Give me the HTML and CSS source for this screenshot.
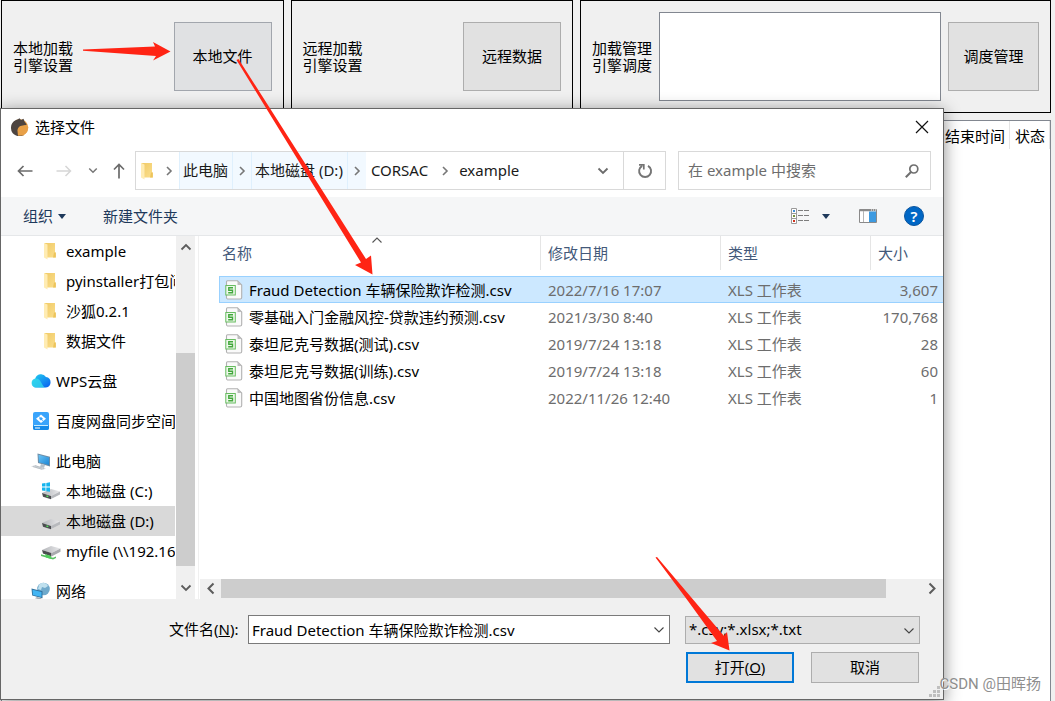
FILE: index.html
```html
<!DOCTYPE html>
<html lang="zh-CN">
<head>
<meta charset="utf-8">
<title>选择文件</title>
<link rel="stylesheet" href="styles.css">
</head>
<body>
<svg class="defs" aria-hidden="true">
  <defs>
    <linearGradient id="g-folder" x1="0" y1="0" x2="1" y2="1"><stop offset="0" stop-color="#f0ca66"/><stop offset="1" stop-color="#fbdf8e"/></linearGradient>
    <linearGradient id="g-cloud" x1="0" y1="0" x2="1" y2="1"><stop offset="0" stop-color="#22d3f0"/><stop offset="1" stop-color="#0a5cf0"/></linearGradient>
    <linearGradient id="g-screen" x1="0" y1="0" x2="1" y2="1"><stop offset="0" stop-color="#6cc4f5"/><stop offset="1" stop-color="#1b86d6"/></linearGradient>
    <linearGradient id="g-disk" x1="0" y1="0" x2="1" y2="0"><stop offset="0" stop-color="#b4b6ba"/><stop offset="1" stop-color="#e8e8ea"/></linearGradient>
  </defs>
  <symbol id="folder" viewBox="0 0 14 18"><path d="M1.500 1h10.500v9.500h.8v5H4L1.500 14z" fill="url(#g-folder)"/><path d="M11 10.500h1.800v5H10z" fill="#edc45c"/><path d="M1 1l3.500 1.500v15L1 15.500z" fill="#ffecb3"/></symbol>
  <symbol id="right" viewBox="0 0 8 10"><path d="M2 1l4 4-4 4" fill="none" stroke="currentColor" stroke-width="1.600"/></symbol>
  <symbol id="down" viewBox="0 0 12 8"><path d="M1.500 1.500L6 6l4.500-4.500" fill="none" stroke="currentColor" stroke-width="1.800"/></symbol>
  <symbol id="thin-down" viewBox="0 0 12 8"><path d="M1.500 1.500L6 6l4.500-4.500" fill="none" stroke="currentColor" stroke-width="1.100"/></symbol>
  <symbol id="sheet" viewBox="0 0 18 20"><path d="M2.500.8h10l4.200 4.200v12.500a1.500 1.500 0 0 1-1.500 1.500H2.500A1.300 1.300 0 0 1 1.500 17.800V2A1.200 1.200 0 0 1 2.500.8z" fill="#fafafa" stroke="#b1b1b1" stroke-width="1.100"/><path d="M12.500.8l4.200 4.200h-4.200z" fill="#bdbdbd"/><rect x=".8" y="5.500" width="9.500" height="9.500" fill="#eef8ec" stroke="#68bd61"/><path d="M8 7.800H3.800v2.400h3.700v2.500H3.200" fill="none" stroke="#43a83c" stroke-width="1.400"/></symbol>
  <symbol id="drive" viewBox="0 0 20 18"><path d="M1 11l9-4 9 2.500-9 4.500z" fill="url(#g-disk)"/><path d="M1 11l9 3v3.200L2 14.800z" fill="#4b4d50"/><path d="M10 14l9-4.500v3L10 17z" fill="#b7b9bd"/><path d="M5.500 14l1.800.6" stroke="#57e05f" stroke-width="1.400"/></symbol>
</svg>

<div class="app">
  <header class="engines">
    <section class="panel"><p class="caption">本地加载<br>引擎设置</p><button class="big hot" type="button">本地文件</button></section>
    <section class="panel"><p class="caption">远程加载<br>引擎设置</p><button class="big" type="button">远程数据</button></section>
    <section class="panel"><p class="caption">加载管理<br>引擎调度</p><div class="queue"></div><button class="big narrow" type="button">调度管理</button></section>
  </header>
  <main class="tasks">
    <table class="task-table">
      <thead><tr><th></th><th class="end">结束时间</th><th class="state">状态</th></tr></thead>
    </table>
  </main>
</div>

<div class="dialog" role="dialog" aria-labelledby="dlg-title">
  <div class="titlebar">
    <svg class="logo" viewBox="0 0 18 18"><circle cx="9" cy="9.500" r="8.300" fill="#e8a047"/><path d="M13 17A9 9 0 0 1 5 17.500 8.500 8.500 0 0 1 5 2l2-.8 1.500-1L10 2l2.500-1.200 1 2.600 2.200 3-1.500 1.200-4.200.8c-2.500 1-3.500 3-3.500 5 0 1.800.5 2.600-.5 4.100A8 8 0 0 1 .8 8z" fill="#4d4440"/><path d="M6.500 13c0-3 1.500-4.700 4-5.200l4-.8 2.300 3-.7 4-3.600 3.500-5.500.3z" fill="#e8a047"/></svg>
    <h1 id="dlg-title">选择文件</h1>
    <button class="plain close" type="button" aria-label="关闭"><svg viewBox="0 0 14 14"><path d="M1 1l12 12M13 1L1 13" stroke="#111" stroke-width="1.200"/></svg></button>
  </div>

  <div class="nav">
    <div class="history">
      <button class="plain" type="button" aria-label="后退"><svg width="16" height="12" viewBox="0 0 16 12"><path d="M15.500 6H1.500M6.500 1L1.500 6l5 5" fill="none" stroke="#6b6b6b" stroke-width="1.700"/></svg></button>
      <button class="plain" type="button" aria-label="前进"><svg width="16" height="12" viewBox="0 0 16 12"><path d="M.5 6h14M9.500 1l5 5-5 5" fill="none" stroke="#d6d6d6" stroke-width="1.500"/></svg></button>
      <button class="plain recent" type="button" aria-label="最近位置"><svg width="10" height="7"><use href="#down"/></svg></button>
      <button class="plain up" type="button" aria-label="上移"><svg width="12" height="16" viewBox="0 0 12 16"><path d="M6 15.500V1.500M1 6.500l5-5 5 5" fill="none" stroke="#6b6b6b" stroke-width="1.700"/></svg></button>
    </div>
    <div class="address">
      <svg class="folder" width="14" height="18"><use href="#folder"/></svg>
      <button class="plain sep first" type="button" aria-label="展开"><svg width="8" height="10"><use href="#right"/></svg></button>
      <button class="plain crumb lit" type="button">此电脑</button>
      <button class="plain sep lit" type="button" aria-label="展开"><svg width="8" height="10"><use href="#right"/></svg></button>
      <button class="plain crumb lit" type="button">本地磁盘 (D:)</button>
      <button class="plain sep lit" type="button" aria-label="展开"><svg width="8" height="10"><use href="#right"/></svg></button>
      <button class="plain crumb" type="button">CORSAC</button>
      <button class="plain sep" type="button" aria-label="展开"><svg width="8" height="10"><use href="#right"/></svg></button>
      <button class="plain crumb" type="button">example</button>
      <button class="plain drop" type="button" aria-label="以前的位置"><svg width="12" height="8"><use href="#down"/></svg></button>
      <button class="plain refresh" type="button" aria-label="刷新"><svg width="16" height="16" viewBox="0 0 16 16"><path d="M5.200 2.800A6 6 0 1 0 11 2.800" fill="none" stroke="#757575" stroke-width="1.900"/><path d="M2 1.800h4.800v4.800" fill="none" stroke="#757575" stroke-width="1.700"/></svg></button>
    </div>
    <div class="search">
      <input type="text" placeholder="在 example 中搜索" aria-label="搜索">
      <svg width="14" height="14" viewBox="0 0 14 14"><circle cx="8.800" cy="5" r="4" fill="none" stroke="#6f6f6f" stroke-width="1.700"/><path d="M6 8L.8 13.200" stroke="#6f6f6f" stroke-width="2"/></svg>
    </div>
  </div>

  <div class="toolbar">
    <button class="plain tool" type="button">组织<svg width="8" height="5" viewBox="0 0 8 5"><path d="M0 0h8L4 5z" fill="#1e395b"/></svg></button>
    <button class="plain tool" type="button">新建文件夹</button>
    <button class="plain view" type="button" aria-label="更改视图">
      <svg width="18" height="16" viewBox="0 0 18 16"><path d="M.5.500h5v15h-5zM.5 5.500h5M.5 10.500h5" fill="#fff" stroke="#9a9a9a"/><path d="M2 2h2v2H2z" fill="#3f8fd6"/><path d="M2 7h2v2H2z" fill="#76923c"/><path d="M2 12h2v2H2z" fill="#d2301c"/><path d="M7 2.500h5M13 2.500h5M7 7.500h5M13 7.500h5M7 12.500h5M13 12.500h5" stroke="#7d7d7d"/></svg>
      <svg width="8" height="5" viewBox="0 0 8 5"><path d="M0 0h8L4 5z" fill="#1e395b"/></svg>
    </button>
    <button class="plain preview" type="button" aria-label="预览窗格"><svg width="18" height="14" viewBox="0 0 18 14"><path d="M.5.500h17v13H.5z" fill="#fff" stroke="#8a8a8a"/><path d="M1 1.500h16" stroke="#8a8a8a" stroke-width="1.500"/><path d="M4.500 2v11" stroke="#b5b5b5"/><path d="M10 2.500h7V13h-7z" fill="#3d9ae0"/><path d="M12 1h1M14 1h1M16 1h1" stroke="#fff"/></svg></button>
    <button class="plain help" type="button" aria-label="帮助">?</button>
  </div>

  <div class="body">
    <nav class="tree">
      <ul>
        <li class="sub"><svg class="folder" width="14" height="18"><use href="#folder"/></svg><a href="#">example</a></li>
        <li class="sub"><svg class="folder" width="14" height="18"><use href="#folder"/></svg><a href="#">pyinstaller打包问题</a></li>
        <li class="sub"><svg class="folder" width="14" height="18"><use href="#folder"/></svg><a href="#">沙狐0.2.1</a></li>
        <li class="sub"><svg class="folder" width="14" height="18"><use href="#folder"/></svg><a href="#">数据文件</a></li>
        <li class="root"><svg width="20" height="18" viewBox="0 0 20 18"><path d="M5 15.500a4.500 4.500 0 0 1-.8-8.800A6 6 0 0 1 15 5a5.300 5.300 0 0 1 0 10.500z" fill="url(#g-cloud)"/><path d="M5 15.500a4.500 4.500 0 0 1 0-9c3 0 4 2 5.500 4.500s2 4 4 4.500z" fill="#35dcec" opacity=".75"/></svg><a href="#">WPS云盘</a></li>
        <li class="root"><svg width="20" height="20" viewBox="0 0 20 20"><rect x="2" y="1" width="16" height="18" rx="2" fill="#3aa4fb"/><path d="M2 14.500h16V17a2 2 0 0 1-2 2H4a2 2 0 0 1-2-2z" fill="#168ae8"/><path d="M3 14.500h14" stroke="#c8ecff"/><path d="M4 17h5" stroke="#fff"/><path d="M10 3.500l5 4.200-5 4.300-5-4.300z" fill="#fff"/><path d="M10 6l2 1.800L10 9.500 8 7.800z" fill="#3aa4fb"/><path d="M7 4.500l6 6.500" stroke="#3aa4fb" stroke-width=".8"/></svg><a href="#">百度网盘同步空间</a></li>
        <li class="root"><svg width="20" height="18" viewBox="0 0 20 18"><path d="M6.500 1.500L19 4.800v9.700L7 11z" fill="#6d8da6"/><path d="M7.500 2.800L18 5.600v7.400L8 10.300z" fill="url(#g-screen)"/><path d="M10 12l4 1-1 3-4-1z" fill="#b6c1ca"/><path d="M0 14.500l4-1.500 11 3.500-3.500 1.500z" fill="#d7dce0"/><path d="M2 14.500l9 2.700M4 13.700l9 2.800" stroke="#aeb5ba" stroke-width=".7"/></svg><a href="#">此电脑</a></li>
        <li class="sub"><svg width="20" height="18" viewBox="0 0 20 18"><use href="#drive"/><path d="M1 1.500l3.500-.5v3.600H1zM5.300.9L9 .3v4.300H5.300zM1 5.400h3.500V9L1 8.500zM5.300 5.400H9v4.300l-3.700-.5z" fill="#16b5ee"/></svg><a href="#">本地磁盘 (C:)</a></li>
        <li class="sub current"><svg width="20" height="18"><use href="#drive"/></svg><a href="#">本地磁盘 (D:)</a></li>
        <li class="sub"><svg width="20" height="18" viewBox="0 0 20 18"><path d="M1 8l9-4 9.500 2.500-9 4.500z" fill="url(#g-disk)"/><path d="M1 8l9.500 3v3.500L2 11.500z" fill="#4b4d50"/><path d="M10.500 11l9-4.500v3.200l-9 4.800z" fill="#a9abaf"/><path d="M0 12.300l12 3.400 3-1.300v1.600l-3 1.500L0 14z" fill="#58bf62"/><path d="M4 12l6 2v3l-5-1.500z" fill="#4fcf5b"/></svg><a href="#">myfile (\\192.168</a></li>
        <li class="root"><svg width="20" height="18" viewBox="0 0 20 18"><circle cx="12.500" cy="7" r="6.300" fill="#6fa9cb"/><path d="M8 3c2-3 7-3 9 1l-3 2-3-1-1 3-3-1z" fill="#bfe0ee"/><path d="M.5 6.500l11 2.700v7L1.200 13.600z" fill="#31719e"/><path d="M1.500 7.700l9 2.200v5L2 12.900z" fill="#42b5f3"/><path d="M6 15l5 1.500-2 1-5-1.200z" fill="#a3adb4"/></svg><a href="#">网络</a></li>
      </ul>
    </nav>
    <div class="vscroll">
      <button class="plain" type="button" aria-label="向上滚动"><svg class="flip" width="12" height="8"><use href="#down"/></svg></button>
      <div class="vtrack"><div class="vthumb"></div></div>
      <button class="plain" type="button" aria-label="向下滚动"><svg width="12" height="8"><use href="#down"/></svg></button>
    </div>
    <div class="files">
      <div class="list">
        <table class="file-table">
          <colgroup><col><col class="c-date"><col class="c-type"><col class="c-size"></colgroup>
          <thead><tr><th>名称<svg class="sort flip" width="12" height="8"><use href="#thin-down"/></svg></th><th>修改日期</th><th>类型</th><th>大小</th></tr></thead>
          <tbody>
            <tr class="selected"><td><span class="name"><svg width="18" height="20"><use href="#sheet"/></svg>Fraud Detection 车辆保险欺诈检测.csv</span></td><td>2022/7/16 17:07</td><td>XLS 工作表</td><td>3,607</td></tr>
            <tr><td><span class="name"><svg width="18" height="20"><use href="#sheet"/></svg>零基础入门金融风控-贷款违约预测.csv</span></td><td>2021/3/30 8:40</td><td>XLS 工作表</td><td>170,768</td></tr>
            <tr><td><span class="name"><svg width="18" height="20"><use href="#sheet"/></svg>泰坦尼克号数据(测试).csv</span></td><td>2019/7/24 13:18</td><td>XLS 工作表</td><td>28</td></tr>
            <tr><td><span class="name"><svg width="18" height="20"><use href="#sheet"/></svg>泰坦尼克号数据(训练).csv</span></td><td>2019/7/24 13:18</td><td>XLS 工作表</td><td>60</td></tr>
            <tr><td><span class="name"><svg width="18" height="20"><use href="#sheet"/></svg>中国地图省份信息.csv</span></td><td>2022/11/26 12:40</td><td>XLS 工作表</td><td>1</td></tr>
          </tbody>
        </table>
      </div>
      <div class="hscroll">
        <button class="plain" type="button" aria-label="向左滚动"><svg class="flip" width="10" height="13"><use href="#right"/></svg></button>
        <div class="htrack"><div class="hthumb"></div></div>
        <button class="plain" type="button" aria-label="向右滚动"><svg width="10" height="13"><use href="#right"/></svg></button>
      </div>
    </div>
  </div>

  <form class="footer">
    <div class="row">
      <label for="fname">文件名(<u>N</u>):</label>
      <div class="combo"><input id="fname" type="text" value="Fraud Detection 车辆保险欺诈检测.csv"><svg width="12" height="8"><use href="#thin-down"/></svg></div>
      <div class="filter"><select aria-label="文件类型"><option>*.csv;*.xlsx;*.txt</option></select><svg width="12" height="8"><use href="#thin-down"/></svg></div>
    </div>
    <div class="row actions">
      <button class="btn primary" type="button">打开(<u>O</u>)</button>
      <button class="btn" type="button">取消</button>
    </div>
    <svg class="grip" width="12" height="12" viewBox="0 0 12 12"><path d="M8 0h3v3H8zM4 4h3v3H4zM8 4h3v3H8zM0 8h3v3H0zM4 8h3v3H4zM8 8h3v3H8z" fill="#bfbfbf"/></svg>
  </form>
</div>

<svg class="marks" width="1055" height="701" viewBox="0 0 1055 701" aria-hidden="true">
  <g fill="#ff2414">
    <path d="M83 49.500L155 46.500 153 42 170.500 51.500 153 60.500 156 56 83 50.800z"/>
    <path d="M236.500 60L238.500 59 366 259 371 255.500 372.500 274.500 355 265 361 262.500z"/>
    <path d="M655.500 557.500L657 557 724 636 727 632 729.500 650.500 711 643 717 641 688 601z"/>
  </g>
</svg>
<p class="watermark">CSDN @田晖扬</p>
</body>
</html>
```
FILE: styles.css
```css
* { box-sizing: border-box; }

body {
  margin: 0;
  min-height: 100vh;
  position: relative;
  overflow: hidden;
  background: #f0f0f0;
  color: #000;
  font: 15px/20px "Noto Sans", "Noto Sans CJK SC", sans-serif;
}

button, input, select { font: inherit; color: inherit; }
svg { display: block; flex: none; }
p, h1, ul { margin: 0; padding: 0; }
a { color: inherit; text-decoration: none; }

.defs { position: absolute; width: 0; height: 0; }
.flip { transform: rotate(180deg); }

.plain {
  display: flex;
  align-items: center;
  justify-content: center;
  padding: 0;
  border: 0;
  background: none;
}

/* Main window */
.app {
  display: flex;
  flex-direction: column;
  gap: 7px;
  height: 100vh;
  padding: 0 4px 0 1px;
}

.engines {
  display: grid;
  grid-template-columns: 3fr 3fr 5fr;
  gap: 7px;
}

.panel {
  display: flex;
  align-items: center;
  justify-content: space-between;
  gap: 7px;
  padding: 11px;
  border: 1px solid #000;
}

.caption { line-height: 17px; white-space: nowrap; }

.big {
  flex: none;
  width: 98px;
  height: 69px;
  padding: 0 0 2px;
  border: 1px solid #adadad;
  background: #e1e1e1;
}
.big.hot { border-color: #a2a6ad; background: #e0e1e3; }
.big.narrow { width: 91px; }

.queue {
  flex: 1;
  height: 89px;
  border: 1px solid #828790;
  background: #fff;
}

.tasks {
  flex: 1;
  border: 1px solid #828790;
  border-bottom: 0;
  background: #fff;
}
.task-table { width: 100%; border-collapse: collapse; table-layout: fixed; }
.task-table th {
  height: 28px;
  padding: 2px 4px 0;
  border-right: 1px solid #e5e5e5;
  font-weight: 400;
  text-align: right;
}
.task-table .end { width: 90px; }
.task-table .state { width: 40px; }

/* File dialog, floating over the main window */
.dialog {
  position: absolute;
  top: 108px;
  right: 111px;
  bottom: 1px;
  left: 0;
  display: flex;
  flex-direction: column;
  border: 1px solid #666;
  background: #fff;
  box-shadow: 0 3px 16px rgba(0, 0, 0, .45);
}

.titlebar {
  display: flex;
  align-items: center;
  gap: 6px;
  height: 36px;
  padding: 0 14px 0 10px;
}
.titlebar h1 { flex: 1; font-size: 15px; font-weight: 400; }
.logo { width: 18px; height: 18px; }
.close svg { width: 14px; height: 14px; }

.nav {
  display: flex;
  align-items: center;
  gap: 12px;
  height: 52px;
  padding: 0 12px 1px 16px;
}
.history { display: flex; align-items: center; gap: 16px; width: 106px; }
.history .plain:nth-child(2) { margin-left: 7px; }
.history .up { margin-left: -1px; }
.recent { color: #777; }

.address {
  flex: 1;
  display: flex;
  align-items: stretch;
  height: 39px;
  border: 1px solid #d9d9d9;
  color: #1a1a1a;
}
.address .folder { align-self: center; margin-left: 4px; }
.crumb { padding: 0 7px 2px 5px; white-space: nowrap; }
.sep { width: 19px; color: #777; }
.sep.first { width: 25px; padding-left: 4px; }
.lit { background: #f2f9ff; border-left: 1px solid #dff0fd; }
.crumb.lit { padding: 0 4px 2px 3px; }
.drop { width: 40px; margin-left: auto; color: #6b6b6b; }
.refresh { width: 42px; border-left: 1px solid #d9d9d9; }

.search {
  display: flex;
  align-items: center;
  width: 253px;
  height: 39px;
  padding: 0 11px 0 9px;
  border: 1px solid #d9d9d9;
}
.search input { flex: 1; min-width: 0; padding: 0 0 2px; border: 0; outline: 0; background: none; }
.search input::placeholder { color: #6d6d6d; opacity: 1; }

.toolbar {
  display: flex;
  align-items: center;
  height: 39px;
  padding: 0 19px 0 22px;
  border-bottom: 1px solid #e5e7e9;
  background: #f5f6f7;
  color: #1e395b;
}
.tool { gap: 5px; margin-right: 37px; }
.view { gap: 13px; margin-left: auto; }
.preview { margin: 0 27px 0 29px; }
.help {
  width: 20px;
  height: 20px;
  border: 1px solid #0a559f;
  border-radius: 50%;
  background: #0067c5;
  color: #fff;
  font-weight: 600;
}

.body { flex: 1; display: flex; min-height: 0; }

.tree { width: 174px; overflow: hidden; }
.tree ul { list-style: none; }
.tree li {
  display: flex;
  align-items: center;
  height: 30px;
  white-space: nowrap;
}
.tree .sub { gap: 5px; padding-left: 40px; }
.tree .sub .folder { margin: 0 4px 0 2px; }
.tree .root { gap: 5px; margin-top: 10px; padding-left: 30px; }
.tree .current { background: #d9d9d9; }

.vscroll {
  display: flex;
  flex-direction: column;
  width: 21px;
  padding-left: 1px;
  border-right: 1px solid #fff;
  background: #f0f0f0 content-box;
  color: #5c5c5c;
}
.vscroll .plain { height: 22px; }
.vtrack { flex: 1; display: flex; flex-direction: column; justify-content: flex-end; padding-bottom: 11px; }
.vthumb { height: 69%; background: #cdcdcd; }

.files {
  flex: 1;
  display: flex;
  flex-direction: column;
  min-width: 0;
  margin-left: 2px;
  border-left: 1px solid #f0f0f0;
}
.list { flex: 1; padding-left: 20px; }
.file-table { width: 100%; border-spacing: 0; table-layout: fixed; }
.c-date { width: 180px; }
.c-type { width: 150px; }
.c-size { width: 73px; }
.file-table th {
  position: relative;
  height: 34px;
  padding: 0 7px 1px;
  border-left: 1px solid #e5e5e5;
  color: #43597a;
  font-weight: 400;
  text-align: left;
}
.file-table th:first-child { border-left: 0; padding-left: 3px; }
.sort { position: absolute; top: 0; left: calc(50% - 9px); color: #555; }
.file-table tbody::before { content: ""; display: block; height: 6px; }
.file-table td {
  height: 27px;
  padding: 0 5px 0 8px;
  color: #6d6d6d;
  white-space: nowrap;
}
.file-table td:first-child { padding-left: 6px; color: #000; }
.file-table td:last-child { text-align: right; }
.selected td {
  background: #cce8ff;
  box-shadow: inset 0 1px #99d1ff, inset 0 -1px #99d1ff;
}
.selected td:first-child { box-shadow: inset 0 1px #99d1ff, inset 0 -1px #99d1ff, inset 1px 0 #99d1ff; }
.name { display: flex; align-items: center; gap: 6px; }

.hscroll { display: flex; height: 20px; margin-left: 1px; padding-right: 1px; background: #f0f0f0; color: #5c5c5c; }
.hscroll .plain { width: 21px; padding-bottom: 1px; }
.htrack { flex: 1; }
.hthumb { width: 95%; height: 19px; background: #cdcdcd; }

.footer {
  position: relative;
  padding: 16px 23px 16px 168px;
  background: #f0f0f0;
}
.row { display: flex; align-items: center; }
.row label { width: 79px; padding-bottom: 1px; white-space: nowrap; }
.combo { position: relative; flex: 1; margin-right: 15px; }
.filter { position: relative; width: 235px; }
.combo input, .filter select {
  display: block;
  width: 100%;
  height: 29px;
  padding: 0 24px 1px 3px;
  border: 1px solid #7a7a7a;
  border-radius: 0;
  outline: 0;
  background: #fff;
  appearance: none;
}
.filter select { height: 28px; border-color: #adadad; background: #e1e1e1; }
.combo svg, .filter svg { position: absolute; top: 11px; right: 5px; color: #444; pointer-events: none; }
.actions { justify-content: flex-end; gap: 17px; margin-top: 8px; padding-right: 1px; }
.btn {
  width: 108px;
  height: 31px;
  padding: 0 0 2px;
  border: 1px solid #adadad;
  background: #e1e1e1;
}
.btn.primary { border: 2px solid #0078d7; }
.grip { position: absolute; right: 2px; bottom: 1px; }

/* Annotations */
.marks { position: absolute; top: 0; left: 0; pointer-events: none; }
.watermark {
  position: absolute;
  right: 14px;
  bottom: 7px;
  color: #8e8e8e;
  font: 15px/20px Roboto, "Noto Sans CJK SC", sans-serif;
  text-shadow: 1px 1px #fff;
}
```
